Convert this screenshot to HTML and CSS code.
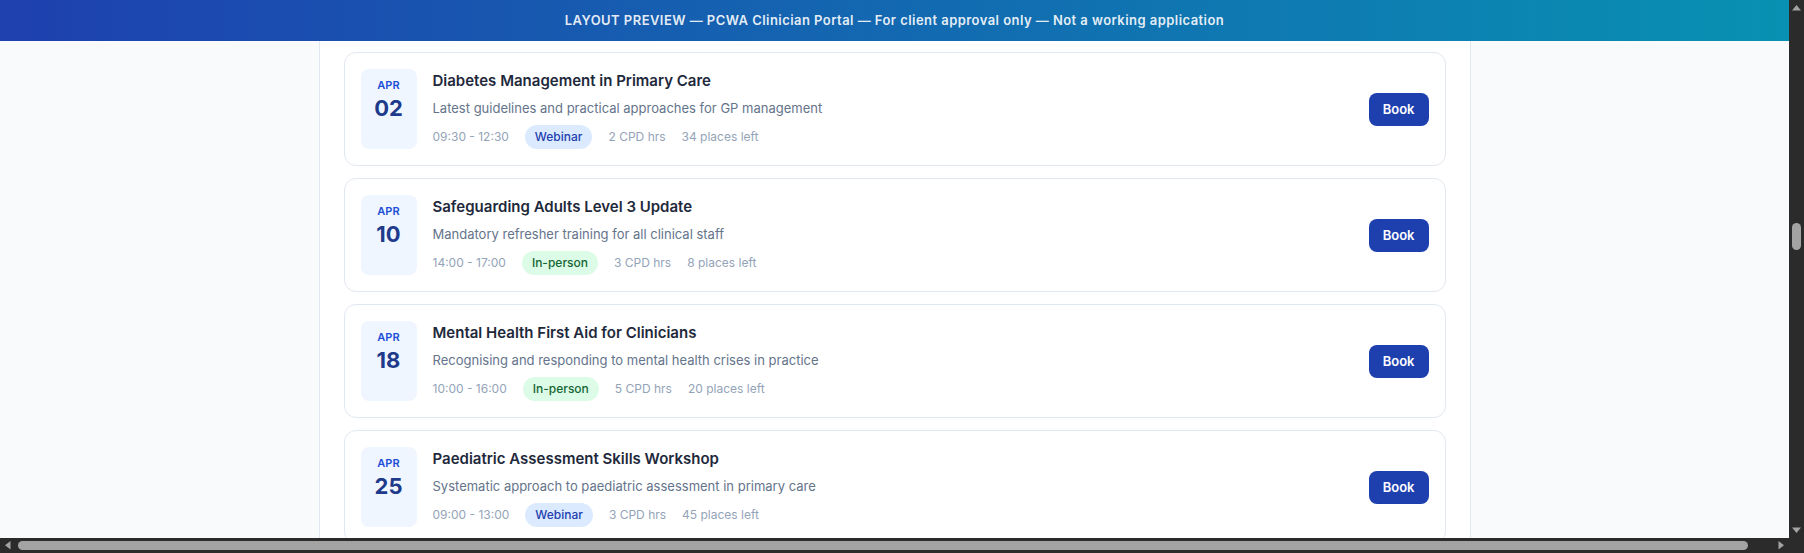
FILE: index.html
```html
<!DOCTYPE html>
<html lang="en">
<head>
<meta charset="utf-8">
<title>PCWA Clinician Portal — Events</title>
<link rel="stylesheet" href="styles.css">
</head>
<body>
<div class="app">
  <div class="banner">LAYOUT PREVIEW — PCWA Clinician Portal — For client approval only — Not a working application</div>
  <main class="column">
    <div class="list">
      <article class="card">
        <div class="date"><span class="month">APR</span><span class="day">02</span></div>
        <div class="info">
          <h3 class="title">Diabetes Management in Primary Care</h3>
          <p class="desc">Latest guidelines and practical approaches for GP management</p>
          <div class="meta"><span>09:30 - 12:30</span><span class="badge badge-web">Webinar</span><span>2 CPD hrs</span><span>34 places left</span></div>
        </div>
        <button class="book">Book</button>
      </article>
      <article class="card">
        <div class="date"><span class="month">APR</span><span class="day">10</span></div>
        <div class="info">
          <h3 class="title">Safeguarding Adults Level 3 Update</h3>
          <p class="desc">Mandatory refresher training for all clinical staff</p>
          <div class="meta"><span>14:00 - 17:00</span><span class="badge badge-person">In-person</span><span>3 CPD hrs</span><span>8 places left</span></div>
        </div>
        <button class="book">Book</button>
      </article>
      <article class="card">
        <div class="date"><span class="month">APR</span><span class="day">18</span></div>
        <div class="info">
          <h3 class="title">Mental Health First Aid for Clinicians</h3>
          <p class="desc">Recognising and responding to mental health crises in practice</p>
          <div class="meta"><span>10:00 - 16:00</span><span class="badge badge-person">In-person</span><span>5 CPD hrs</span><span>20 places left</span></div>
        </div>
        <button class="book">Book</button>
      </article>
      <article class="card">
        <div class="date"><span class="month">APR</span><span class="day">25</span></div>
        <div class="info">
          <h3 class="title">Paediatric Assessment Skills Workshop</h3>
          <p class="desc">Systematic approach to paediatric assessment in primary care</p>
          <div class="meta"><span>09:00 - 13:00</span><span class="badge badge-web">Webinar</span><span>3 CPD hrs</span><span>45 places left</span></div>
        </div>
        <button class="book">Book</button>
      </article>
    </div>
  </main>
</div>
<div class="vbar" aria-hidden="true">
  <svg class="arrow" viewBox="0 0 15 15" width="15" height="15"><polygon points="3,10.5 12,10.5 7.5,5" /></svg>
  <div class="vtrack"><div class="vthumb"></div></div>
  <svg class="arrow" viewBox="0 0 15 15" width="15" height="15"><polygon points="3,4.5 12,4.5 7.5,10" /></svg>
</div>
<div class="hbar" aria-hidden="true">
  <svg class="arrow" viewBox="0 0 15 15" width="15" height="15"><polygon points="10.5,3 10.5,11.5 5,7.25" /></svg>
  <div class="htrack"><div class="hthumb"></div></div>
  <svg class="arrow" viewBox="0 0 15 15" width="15" height="15"><polygon points="4.5,3 4.5,11.5 10,7.25" /></svg>
</div>
<div class="corner" aria-hidden="true"></div>
</body>
</html>
```

FILE: styles.css
```css
html {
  height: 100%;
}

body {
  margin: 0;
  height: 100%;
  overflow: hidden;
  display: grid;
  grid-template-columns: minmax(0, 1fr) 15px;
  grid-template-rows: minmax(0, 1fr) 15px;
  background: #f8fafc;
  font-family: Inter, "Noto Sans", "Liberation Sans", sans-serif;
  color: #1e293b;
}

.app {
  grid-column: 1;
  grid-row: 1;
  min-height: 0;
  display: flex;
  flex-direction: column;
  overflow: hidden;
}

.banner {
  flex: none;
  background: linear-gradient(90deg, #1e40af 0%, #0891b2 100%);
  color: rgba(255, 255, 255, 0.9);
  font-size: 13px;
  font-weight: 600;
  letter-spacing: 0.45px;
  line-height: 17px;
  padding: 12px 16px;
  text-align: center;
}

.column {
  flex: 1;
  box-sizing: border-box;
  width: 100%;
  max-width: 1152px;
  margin: 0 auto;
  background: #ffffff;
  border-left: 1px solid #e2e8f0;
  border-right: 1px solid #e2e8f0;
  padding: 11px 24px 0;
}

.list {
  display: flex;
  flex-direction: column;
  gap: 12px;
}

.card {
  display: flex;
  align-items: stretch;
  gap: 16px;
  padding: 16px;
  background: #ffffff;
  border: 1px solid #e2e8f0;
  border-radius: 12px;
}

.date {
  flex: none;
  width: 56px;
  box-sizing: border-box;
  padding-top: 8px;
  background: #eff6ff;
  border-radius: 8px;
  display: flex;
  flex-direction: column;
  align-items: center;
}

.month {
  font-size: 11px;
  line-height: 16px;
  font-weight: 600;
  color: #1d4ed8;
}

.day {
  font-size: 22px;
  line-height: 30px;
  font-weight: 700;
  color: #1e3a8a;
}

.info {
  flex: 1;
  min-width: 0;
}

.title {
  margin: 0;
  font-size: 15px;
  line-height: 24px;
  font-weight: 600;
  color: #1e293b;
}

.desc {
  margin: 5px 0 0;
  font-size: 13px;
  line-height: 20px;
  color: #64748b;
}

.meta {
  margin-top: 7px;
  display: flex;
  align-items: center;
  gap: 16px;
  font-size: 12px;
  line-height: 16px;
  color: #94a3b8;
}

.badge {
  padding: 4px 10px;
  border-radius: 999px;
  font-weight: 500;
}

.badge-web {
  background: #dbeafe;
  color: #1e40af;
}

.badge-person {
  background: #dcfce7;
  color: #166534;
}

.book {
  align-self: center;
  flex: none;
  border: 0;
  border-radius: 8px;
  background: #1e40af;
  color: #ffffff;
  font-family: inherit;
  font-size: 13px;
  font-weight: 600;
  line-height: 17px;
  padding: 8px 14px;
  cursor: pointer;
}

/* window scrollbars as captured in the reference */
.vbar,
.hbar,
.corner {
  background: #2b2b2b;
}

.arrow {
  display: block;
  flex: none;
  fill: #a3a3a3;
}

.vbar {
  grid-column: 2;
  grid-row: 1;
  display: flex;
  flex-direction: column;
}

.vtrack {
  flex: 1;
  padding-top: 208px;
}

.vthumb {
  width: 9px;
  height: 27px;
  margin: 0 auto;
  border-radius: 5px;
  background: #a3a3a3;
}

.hbar {
  grid-column: 1;
  grid-row: 2;
  display: flex;
  align-items: center;
}

.htrack {
  flex: 1;
  padding: 0 3px;
}

.hthumb {
  width: 98.7%;
  height: 9px;
  border-radius: 5px;
  background: #a3a3a3;
}

.corner {
  grid-column: 2;
  grid-row: 2;
}
```
